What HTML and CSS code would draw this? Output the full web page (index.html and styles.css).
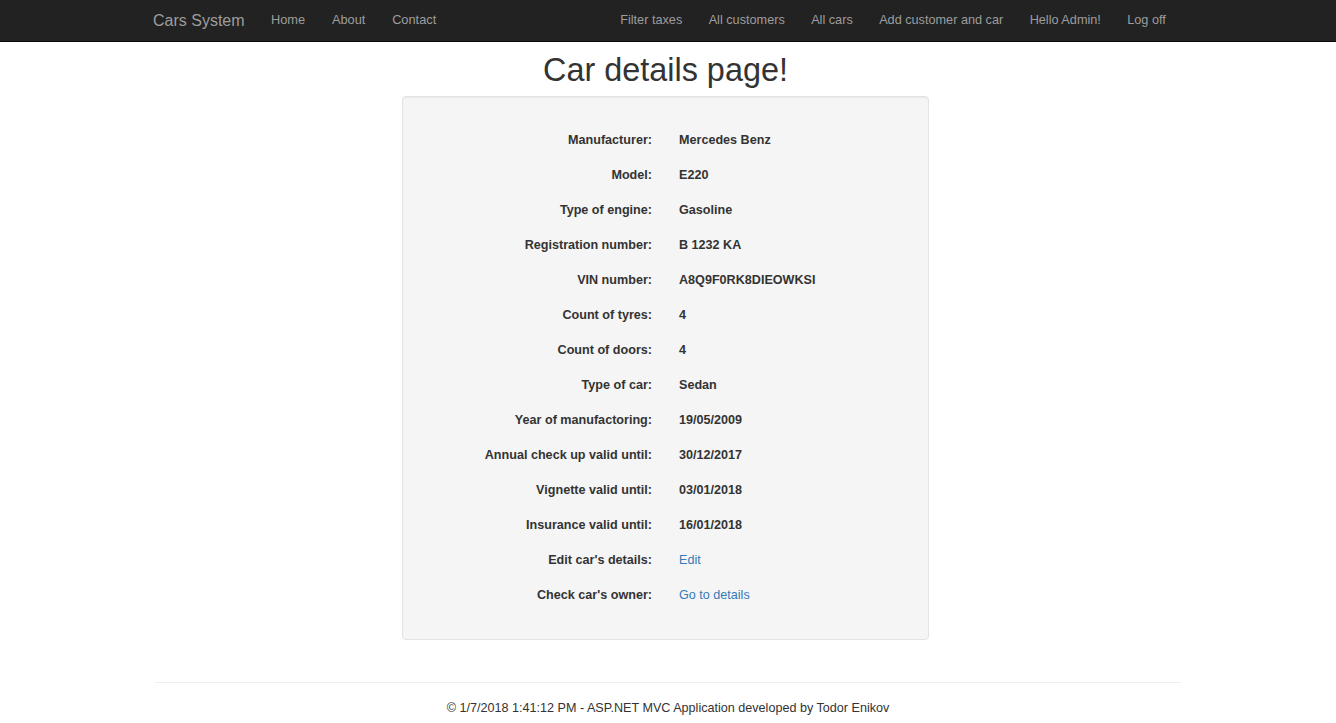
FILE: index.html
```html
<!DOCTYPE html>
<html lang="en">
<head>
<meta charset="utf-8">
<title>Car details page!</title>
<link rel="stylesheet" href="styles.css">
</head>
<body>
<header class="navbar">
  <div class="navbar-inner">
    <a class="brand" href="#">Cars System</a>
    <ul class="nav">
      <li><a href="#">Home</a></li>
      <li><a href="#">About</a></li>
      <li><a href="#">Contact</a></li>
    </ul>
    <ul class="nav nav-right">
      <li><a href="#">Filter taxes</a></li>
      <li><a href="#">All customers</a></li>
      <li><a href="#">All cars</a></li>
      <li><a href="#">Add customer and car</a></li>
      <li><a href="#">Hello Admin!</a></li>
      <li><a href="#">Log off</a></li>
    </ul>
  </div>
</header>
<main class="container">
  <div class="content">
    <h1 class="title">Car details page!</h1>
    <div class="well">
      <dl class="details">
        <dt>Manufacturer:</dt><dd>Mercedes Benz</dd>
        <dt>Model:</dt><dd>E220</dd>
        <dt>Type of engine:</dt><dd>Gasoline</dd>
        <dt>Registration number:</dt><dd>B 1232 KA</dd>
        <dt>VIN number:</dt><dd>A8Q9F0RK8DIEOWKSI</dd>
        <dt>Count of tyres:</dt><dd>4</dd>
        <dt>Count of doors:</dt><dd>4</dd>
        <dt>Type of car:</dt><dd>Sedan</dd>
        <dt>Year of manufactoring:</dt><dd>19/05/2009</dd>
        <dt>Annual check up valid until:</dt><dd>30/12/2017</dd>
        <dt>Vignette valid until:</dt><dd>03/01/2018</dd>
        <dt>Insurance valid until:</dt><dd>16/01/2018</dd>
        <dt>Edit car's details:</dt><dd><a href="#">Edit</a></dd>
        <dt>Check car's owner:</dt><dd><a href="#">Go to details</a></dd>
      </dl>
    </div>
  </div>
  <hr class="rule">
  <footer class="footer">
    <p>&copy; 1/7/2018 1:41:12 PM - ASP.NET MVC Application developed by Todor Enikov</p>
  </footer>
</main>
</body>
</html>
```
FILE: styles.css
```css
* { box-sizing: border-box; }
html, body { margin: 0; padding: 0; }
body {
  font-family: "Liberation Sans", Arial, Helvetica, sans-serif;
  font-size: 12.6px;
  line-height: 1.42857;
  color: #333;
  background: #fff;
}
a { color: #337ab7; text-decoration: none; }

.navbar {
  background: #222;
  border-bottom: 1px solid #080808;
  height: 42px;
}
.navbar-inner {
  max-width: 1056px;
  margin: 0 auto;
  height: 41px;
  padding-bottom: 1px;
  display: flex;
  align-items: center;
}
.brand {
  color: #9d9d9d;
  font-size: 16px;
  padding: 0 13px;
  line-height: 20px;
  margin-top: 1px;
}
.nav {
  list-style: none;
  margin: 0;
  padding: 0;
  display: flex;
}
.nav a {
  display: block;
  color: #9d9d9d;
  font-size: 12.8px;
  line-height: 18px;
  padding: 0 13.4px;
}
.nav-right { margin-left: auto; margin-right: 17px; }
.nav-right a { font-size: 12.7px; padding: 0 13.2px; }

.container {
  width: 1026px;
  margin: 0 auto;
}
.content {
  width: 527px;
  margin-left: 247px;
}
.title {
  margin: 11px 0 7px;
  font-size: 32.4px;
  font-weight: 500;
  line-height: 1.1;
  text-align: center;
  color: #333;
}
.well {
  background: #f5f5f5;
  border: 1px solid #e3e3e3;
  border-radius: 4px;
  box-shadow: inset 0 1px 1px rgba(0,0,0,0.05);
  padding: 27px 0 25px;
}
.details {
  margin: 0;
  display: grid;
  grid-template-columns: 1fr 1fr;
  column-gap: 27px;
  grid-auto-rows: 35px;
  align-items: center;
}
.details dt {
  font-weight: bold;
  text-align: right;
}
.details dd {
  margin: 0;
  font-weight: bold;
}
.details dd a { font-weight: normal; }

.rule {
  margin: 42px 0 0;
  border: 0;
  border-top: 1px solid #eee;
}
.footer {
  text-align: center;
}
.footer p {
  margin: 0;
  padding: 16px 0 8px;
  line-height: 18px;
}
```
